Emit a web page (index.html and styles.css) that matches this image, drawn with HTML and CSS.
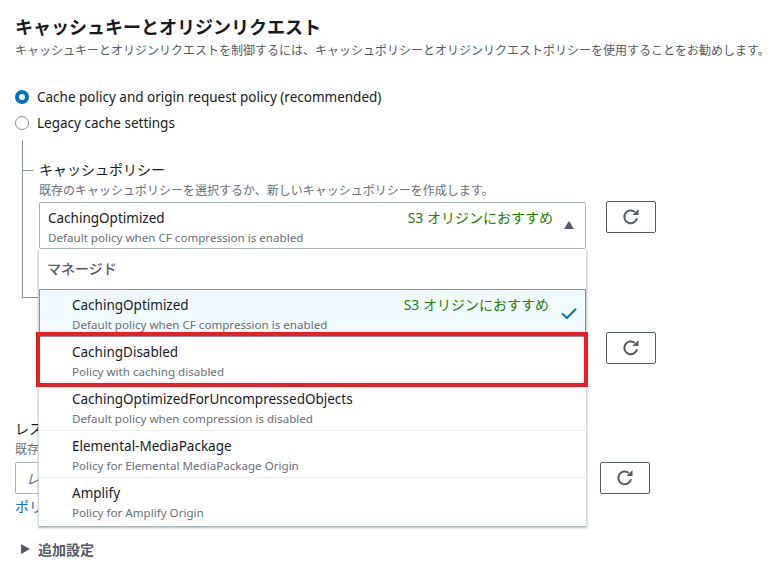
FILE: index.html
```html
<!DOCTYPE html>
<html lang="ja">
<head>
<meta charset="utf-8">
<title>キャッシュキーとオリジンリクエスト</title>
<link rel="stylesheet" href="styles.css">
</head>
<body>
<main class="page">
  <h2 class="title">キャッシュキーとオリジンリクエスト</h2>
  <p class="lead">キャッシュキーとオリジンリクエストを制御するには、キャッシュポリシーとオリジンリクエストポリシーを使用することをお勧めします。</p>

  <div class="radios">
    <div class="radio-row"><span class="radio radio-on"></span><span>Cache policy and origin request policy (recommended)</span></div>
    <div class="radio-row"><span class="radio"></span><span>Legacy cache settings</span></div>
  </div>

  <section class="tree">
    <div class="tree-item">
      <div class="label">キャッシュポリシー</div>
      <div class="hint">既存のキャッシュポリシーを選択するか、新しいキャッシュポリシーを作成します。</div>
      <div class="field-row">
        <div class="select">
          <div class="opt-main"><span class="opt-name">CachingOptimized</span><span class="tag">S3 オリジンにおすすめ</span></div>
          <div class="opt-desc">Default policy when CF compression is enabled</div>
          <svg class="caret" width="10" height="8" viewBox="0 0 10 8"><path d="M0 8 5 0l5 8z" fill="#545b64"/></svg>
        </div>
        <button class="refresh"><svg width="18" height="18" viewBox="0 0 18 18"><path d="M15 10.2A6.4 6.4 0 1 1 12.8 3.9" fill="none" stroke="#545b64" stroke-width="2"/><path d="M10.6 6.9h5.9V1z" fill="#545b64"/></svg></button>
      </div>
    </div>
    <div class="second-row">
      <button class="refresh"><svg width="18" height="18" viewBox="0 0 18 18"><path d="M15 10.2A6.4 6.4 0 1 1 12.8 3.9" fill="none" stroke="#545b64" stroke-width="2"/><path d="M10.6 6.9h5.9V1z" fill="#545b64"/></svg></button>
    </div>
  </section>

  <section class="response">
    <div class="label">レスポンスヘッダーポリシー</div>
    <div class="hint">既存のポリシーを選択</div>
    <div class="field-row response-row">
      <div class="input">レスポンスヘッダーポリシーを選択</div>
      <button class="refresh"><svg width="18" height="18" viewBox="0 0 18 18"><path d="M15 10.2A6.4 6.4 0 1 1 12.8 3.9" fill="none" stroke="#545b64" stroke-width="2"/><path d="M10.6 6.9h5.9V1z" fill="#545b64"/></svg></button>
    </div>
    <a class="link">ポリシーを作成</a>
  </section>

  <div class="more"><svg width="9" height="10" viewBox="0 0 9 10"><path d="M0 0 9 5 0 10z" fill="#545b64"/></svg><span>追加設定</span></div>
</main>

<div class="dropdown">
  <div class="group">マネージド</div>
  <div class="option option-selected">
    <div class="opt-main"><span class="opt-name">CachingOptimized</span><span class="tag">S3 オリジンにおすすめ</span></div>
    <div class="opt-desc">Default policy when CF compression is enabled</div>
    <svg class="check" width="16" height="11" viewBox="0 0 16 11"><path d="M1 5.5l5 4.5 9-9.300" fill="none" stroke="#0073bb" stroke-width="2"/></svg>
  </div>
  <div class="option">
    <div class="opt-name">CachingDisabled</div>
    <div class="opt-desc">Policy with caching disabled</div>
  </div>
  <div class="option">
    <div class="opt-name">CachingOptimizedForUncompressedObjects</div>
    <div class="opt-desc">Default policy when compression is disabled</div>
  </div>
  <div class="option">
    <div class="opt-name">Elemental-MediaPackage</div>
    <div class="opt-desc">Policy for Elemental MediaPackage Origin</div>
  </div>
  <div class="option option-last">
    <div class="opt-name">Amplify</div>
    <div class="opt-desc">Policy for Amplify Origin</div>
  </div>
</div>
<div class="highlight"></div>
</body>
</html>
```
FILE: styles.css
```css
* { box-sizing: border-box; }
html, body { margin: 0; padding: 0; background: #fff; }
body {
  position: relative;
  width: 781px;
  height: 563px;
  overflow: hidden;
  font-family: "Noto Sans", "Noto Sans CJK JP", sans-serif;
  font-size: 13.5px;
  color: #16191f;
}
.page { padding: 14px 0 0 15px; width: 781px; }
.title { margin: 0; font-size: 18px; line-height: 24px; font-weight: 700; font-family: "Noto Sans CJK JP", sans-serif; }
.lead { margin: 0; padding-top: 2px; font-size: 12px; line-height: 20px; color: #545b64; white-space: nowrap; font-family: "Noto Sans CJK JP", sans-serif; }
.radios { margin-top: 27px; display: flex; flex-direction: column; gap: 6px; }
.radio-row { display: flex; align-items: center; gap: 8px; height: 20px; }
.radio { width: 14px; height: 14px; border-radius: 50%; border: 1px solid #879596; background: #fff; }
.radio-on { border: 4px solid #0073bb; }
.tree {
  margin-top: 7px;
  margin-left: 7px;
  height: 158px;
  border-left: 1px solid #879596;
  border-bottom: 1px solid #879596;
  padding-top: 18px;
  position: relative;
  width: 20px;
  overflow: visible;
}
.tree-item { position: relative; margin-left: 16px; width: 640px; }
.tree-item::before { content: ""; position: absolute; left: -16px; top: 12px; width: 10px; border-top: 1px solid #879596; }
.label { font-size: 14px; line-height: 22px; font-family: "Noto Sans CJK JP", sans-serif; }
.hint { margin-top: 1px; font-size: 12px; line-height: 18px; color: #687078; white-space: nowrap; font-family: "Noto Sans CJK JP", sans-serif; }
.field-row { display: flex; gap: 20px; align-items: flex-start; margin-top: 3px; }
.select {
  position: relative;
  width: 547px;
  height: 47px;
  border: 1px solid #aab7b8;
  border-radius: 2px;
  padding: 5px 8px 0;
  background: #fff;
}
.opt-main { display: flex; justify-content: space-between; padding-right: 24px; }
.opt-name { font-size: 13.5px; line-height: 20px; color: #16191f; white-space: nowrap; }
.tag { font-size: 14px; line-height: 20px; color: #1d8102; white-space: nowrap; }
.opt-desc { font-size: 11.6px; line-height: 19px; color: #687078; white-space: nowrap; }
.caret { position: absolute; right: 11px; top: 18px; }
.refresh {
  width: 50px;
  height: 32px;
  margin-top: -1px;
  border: 1px solid #545b64;
  border-radius: 2px;
  background: #fff;
  padding: 0;
  display: flex;
  align-items: center;
  justify-content: center;
}
.second-row { position: absolute; left: 583px; top: 193px; }
.response { margin-top: 119px; }
.response-row { gap: 20px; margin-top: 4px; }
.input {
  width: 565px;
  height: 32px;
  border: 1px solid #aab7b8;
  border-radius: 2px;
  padding: 5px 10px;
  font-style: italic;
  color: #687078;
  font-family: "Noto Sans CJK JP", sans-serif;
  white-space: nowrap;
  overflow: hidden;
}
.response-row .refresh { margin-top: 0; }
.link { display: block; margin-top: 2px; color: #0073bb; font-size: 14px; line-height: 20px; font-family: "Noto Sans CJK JP", sans-serif; }
.more { display: flex; align-items: center; gap: 8px; margin: 23px 0 0 6px; font-size: 14px; font-weight: 700; color: #545b64; font-family: "Noto Sans CJK JP", sans-serif; line-height: 20px; }
.dropdown {
  position: absolute;
  left: 38px;
  top: 250px;
  width: 549px;
  height: 277px;
  background: #fff;
  border-right: 1px solid #d5dbdb;
  border-left: 1px solid #d5dbdb;
  border-bottom: 1px solid #aab7b8;
  box-shadow: 0 1px 2px rgba(0, 21, 41, .3);
  padding-top: 39px;
}
.group { position: absolute; left: 8px; top: 8px; font-size: 14px; line-height: 20px; font-weight: 500; color: #545b64; font-family: "Noto Sans CJK JP", sans-serif; }
.option { position: relative; height: 47px; padding: 5px 0 0 33px; border-bottom: 1px solid #eaeded; }
.option .opt-main { padding-right: 36px; }
.option-last { border-bottom: 0; }
.option-selected { height: 48px; background: #f1faff; border: 1px solid #879596; padding-left: 32px; }
.check { position: absolute; right: 8px; top: 18px; }
.highlight { position: absolute; left: 36px; top: 332px; width: 552px; height: 55px; border: 4.5px solid #ed1c24; }
```
